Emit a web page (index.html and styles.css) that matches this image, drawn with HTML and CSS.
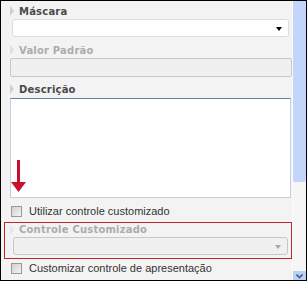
FILE: index.html
```html
<!DOCTYPE html>
<html lang="pt">
<head>
    <meta charset="UTF-8">
    <title>Propriedades</title>
    <link rel="stylesheet" href="styles.css">
</head>
<body>
    <div class="frame">
        <div class="panel">
            <div class="label">
                <svg class="grip" width="4" height="10" viewBox="0 0 4 10"><polygon points="0,0 4,5 0,10" fill="#cfcfcf"/></svg>
                Máscara
            </div>
            <div class="select">
                <span class="caret"></span>
            </div>

            <div class="label off">
                <svg class="grip" width="4" height="10" viewBox="0 0 4 10"><polygon points="0,0 4,5 0,10" fill="#dedede"/></svg>
                Valor Padrão
            </div>
            <div class="input"></div>

            <div class="label">
                <svg class="grip" width="4" height="10" viewBox="0 0 4 10"><polygon points="0,0 4,5 0,10" fill="#cfcfcf"/></svg>
                Descrição
            </div>
            <div class="textarea">
                <svg class="arrow" width="16" height="33" viewBox="0 0 16 33">
                    <rect x="6" y="0" width="3" height="24" fill="#c8102e"/>
                    <polygon points="0,22 15,22 7.5,32" fill="#c8102e"/>
                </svg>
            </div>

            <div class="check">
                <span class="box"></span>
                Utilizar controle customizado
            </div>

            <div class="highlight">
                <div class="label off">
                    <svg class="grip" width="4" height="10" viewBox="0 0 4 10"><polygon points="0,0 4,5 0,10" fill="#e4e4e4"/></svg>
                    Controle Customizado
                </div>
                <div class="select disabled">
                    <span class="caret"></span>
                </div>
            </div>

            <div class="check">
                <span class="box"></span>
                Customizar controle de apresentação
            </div>
            <div class="next"></div>
        </div>
        <div class="scroll">
            <div class="thumb"></div>
            <div class="track"></div>
            <div class="btn">
                <svg width="7" height="5" viewBox="0 0 7 5"><polyline points="0.5,0.5 3.5,3.5 6.5,0.5" fill="none" stroke="#4a5f8a" stroke-width="1.6"/></svg>
            </div>
        </div>
    </div>
</body>
</html>
```

FILE: styles.css
```css
* {
    margin: 0;
    padding: 0;
    box-sizing: border-box;
}
body {
    font-family: "DejaVu Sans", Verdana, sans-serif;
    font-size: 10px;
    color: #333;
}
.frame {
    width: 307px;
    height: 281px;
    border: 1px solid #000;
    display: flex;
    overflow: hidden;
}
.panel {
    flex: 1;
    background: #f3f3f3;
    padding-top: 3px;
    border-right: 1px solid #fafafa;
}
.label {
    display: flex;
    align-items: center;
    gap: 5px;
    height: 14px;
    padding-left: 9px;
    font-weight: bold;
    color: #4a4a4a;
    letter-spacing: 0.2px;
}
.label.off {
    color: #acacac;
}
.select {
    position: relative;
    height: 18px;
    margin: 1px 3px 0 11px;
    background: #fff;
    border: 1px solid #dcdcdc;
    border-radius: 3px;
}
.caret {
    position: absolute;
    right: 6px;
    top: 7px;
    border-left: 3px solid transparent;
    border-right: 3px solid transparent;
    border-top: 4px solid #000;
}
.select.disabled {
    background: #f0f0f0;
    border-color: #c8c8c8;
}
.select.disabled .caret {
    border-top-color: #a8a8a8;
}
.input {
    height: 19px;
    margin: 1px 0 5px 9px;
    background: #f0f0f0;
    border: 1px solid #c8c8c8;
    border-radius: 2px;
}
.label + .select {
    margin-bottom: 6px;
}
.textarea {
    position: relative;
    height: 100px;
    margin: 2px 1px 0 9px;
    background: #fff;
    border: 1px solid #c4d0dc;
    border-top-color: #5f84a8;
}
.arrow {
    position: absolute;
    left: 0;
    top: 61px;
}
.check {
    display: flex;
    align-items: center;
    gap: 7px;
    height: 14px;
    padding-left: 10px;
    color: #333;
    font-size: 11px;
    font-family: "Liberation Sans", Arial, sans-serif;
}
.textarea + .check {
    margin-top: 6px;
}
.box {
    width: 11px;
    height: 11px;
    border: 1px solid #999;
    background: linear-gradient(135deg, #d0d0d0, #f4f4f4);
}
.highlight {
    height: 37px;
    margin: 4px 0 2px 3px;
    border: 1px solid #c0272d;
    padding-top: 0;
}
.highlight .label {
    padding-left: 5px;
    height: 13px;
}
.highlight .select {
    margin: 1px 3px 0 8px;
}
.next {
    height: 10px;
    margin: 5px 3px 0 10px;
    border: 1px solid #d0d0d0;
    border-radius: 3px;
}
.scroll {
    width: 13px;
    display: flex;
    flex-direction: column;
    background: #f6f6f6;
}
.thumb {
    height: 181px;
    background: #c4d5fa;
    border-radius: 0 0 2px 2px;
}
.track {
    flex: 1;
}
.btn {
    height: 9px;
    background: #bcd0f6;
    display: flex;
    justify-content: center;
    padding-top: 3px;
}
```
